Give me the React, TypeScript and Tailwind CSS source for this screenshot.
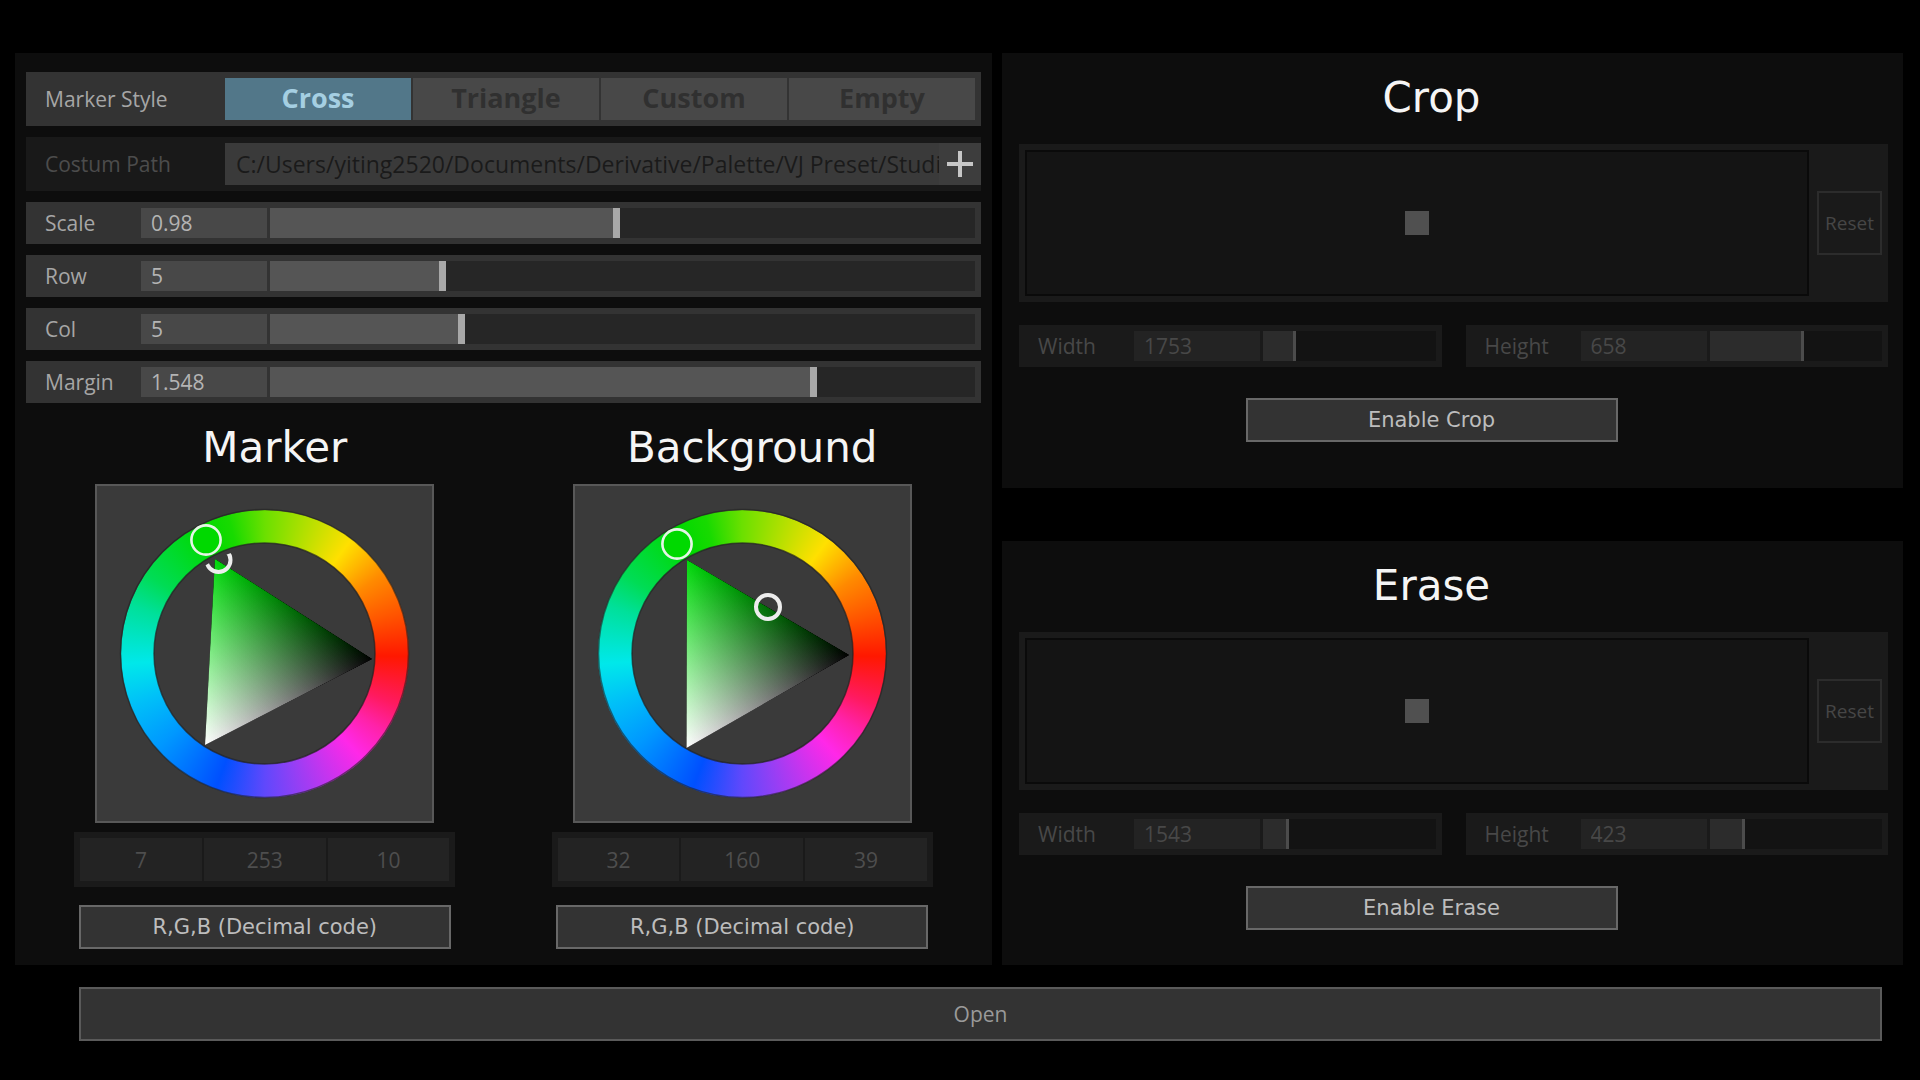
import { useId, useState } from "react";

const BUTTON =
  "h-11 w-[372px] max-w-full border-2 border-[#686868] bg-[#333333] font-['DejaVu_Sans',sans-serif] text-[21px] leading-7 text-[#bdbdbd]";
const TITLE =
  "font-['DejaVu_Sans',sans-serif] text-[42px] leading-[48px] text-[#f5f5f5]";

type SliderProps = {
  label: string;
  value: string;
  percent: number;
  disabled?: boolean;
};

function SliderRow({ label, value, percent, disabled = false }: SliderProps) {
  const id = useId();
  const [position, setPosition] = useState(percent);
  const [text, setText] = useState(value);
  const fill = disabled ? "#2c2c2c" : "#555555";
  const track = disabled ? "#131313" : "#262626";

  return (
    <div
      className={
        "flex h-[42px] w-full min-w-0 items-center pr-1.5 " +
        (disabled ? "bg-[#1a1a1a] text-[#484848]" : "bg-[#333333] text-[#a6a6a6]")
      }
    >
      <label htmlFor={id} className="w-[115px] shrink-0 pl-[19px]">
        {label}
      </label>
      <input
        id={id}
        type="text"
        value={text}
        disabled={disabled}
        onChange={(e) => setText(e.target.value)}
        className={
          "mr-[3px] h-[30px] w-[126px] shrink-0 px-2.5 outline-none " +
          (disabled ? "bg-[#232323]" : "bg-[#484848] text-[#b4b4b4]")
        }
      />
      <input
        type="range"
        aria-label={label + " slider"}
        min={0}
        max={100}
        step="any"
        value={position}
        disabled={disabled}
        onChange={(e) => setPosition(Number(e.target.value))}
        style={{
          background: `linear-gradient(to right, ${fill} ${position}%, ${track} ${position}%)`,
        }}
        className={
          "h-[30px] min-w-0 flex-1 appearance-none outline-none [&::-webkit-slider-thumb]:h-[30px] [&::-webkit-slider-thumb]:appearance-none " +
          (disabled
            ? "[&::-webkit-slider-thumb]:w-[3px] [&::-webkit-slider-thumb]:bg-[#4c4c4c]"
            : "[&::-webkit-slider-thumb]:w-[7px] [&::-webkit-slider-thumb]:bg-[#a8a8a8]")
        }
      />
    </div>
  );
}

type Point = [number, number];

/* Foot of the perpendicular from p onto the line a-b. */
function foot(p: Point, a: Point, b: Point): Point {
  const dx = b[0] - a[0];
  const dy = b[1] - a[1];
  const t = ((p[0] - a[0]) * dx + (p[1] - a[1]) * dy) / (dx * dx + dy * dy);
  return [a[0] + t * dx, a[1] + t * dy];
}

type WheelProps = {
  hue: Point;
  white: Point;
  black: Point;
  ringHandle: Point;
  triangleHandle: Point;
};

function ColorWheel({ hue, white, black, ringHandle, triangleHandle }: WheelProps) {
  const id = useId();
  const points = [hue, white, black].map((p) => p.join(",")).join(" ");
  const hueEnd = foot(hue, white, black);
  const whiteEnd = foot(white, hue, black);

  return (
    <div className="grid aspect-square w-[339px] max-w-full place-items-center border-2 border-[#585858] bg-[#3a3a3a]">
      <div className="size-72 rounded-full [grid-area:1/1] bg-[conic-gradient(#6be000_0deg,#ffe000_37deg,#ff8a00_56deg,#ff5500_73deg,#ff1800_91deg,#ff1a60_111deg,#ff22a8_123deg,#ff28e8_137deg,#cc33ee_151deg,#9040f5_167deg,#6048fc_180deg,#0050ff_200deg,#0098ff_229deg,#00c0f8_249deg,#00e8ea_266deg,#00e09a_290deg,#00dc55_304deg,#00d900_333deg,#18da00_345deg,#6be000_360deg)]" />
      <svg viewBox="2 2 335 335" className="size-full [grid-area:1/1]" aria-hidden="true">
        <defs>
          <linearGradient
            id={id + "h"}
            gradientUnits="userSpaceOnUse"
            x1={hue[0]}
            y1={hue[1]}
            x2={hueEnd[0]}
            y2={hueEnd[1]}
          >
            <stop offset="0" stopColor="#00d80a" />
            <stop offset="1" stopColor="#000000" />
          </linearGradient>
          <linearGradient
            id={id + "w"}
            gradientUnits="userSpaceOnUse"
            x1={white[0]}
            y1={white[1]}
            x2={whiteEnd[0]}
            y2={whiteEnd[1]}
          >
            <stop offset="0" stopColor="#ffffff" />
            <stop offset="1" stopColor="#000000" />
          </linearGradient>
          <clipPath id={id + "c"}>
            <circle cx="169.5" cy="169.5" r="106" />
          </clipPath>
        </defs>
        <circle cx="169.5" cy="169.5" r="144" fill="none" stroke="#222222" strokeOpacity="0.6" strokeWidth="1.5" />
        <circle cx="169.5" cy="169.5" r="110.5" fill="#3a3a3a" stroke="#222222" strokeOpacity="0.7" strokeWidth="1.5" />
        <g className="isolate">
          <polygon points={points} fill={`url(#${id}h)`} />
          <polygon points={points} fill={`url(#${id}w)`} className="mix-blend-plus-lighter" />
        </g>
        <g clipPath={`url(#${id}c)`}>
          <circle cx={triangleHandle[0]} cy={triangleHandle[1]} r="12" fill="none" stroke="#ededed" strokeWidth="4" />
        </g>
        <circle cx={ringHandle[0]} cy={ringHandle[1]} r="14.6" fill="#00d900" stroke="#e6f5e6" strokeWidth="2.6" />
      </svg>
    </div>
  );
}

type PickerProps = { title: string; rgb: [string, string, string]; wheel: WheelProps };

function ColorPicker({ title, rgb, wheel }: PickerProps) {
  const channels = ["Red", "Green", "Blue"];
  return (
    <section className="flex min-w-0 flex-1 flex-col items-center">
      <h2 className={TITLE + " mb-3 pl-5"}>{title}</h2>
      <ColorWheel {...wheel} />
      <div className="mt-[9px] flex h-[55px] w-[381px] max-w-full gap-0.5 bg-[#1a1a1a] p-1.5">
        {rgb.map((value, i) => (
          <input
            key={channels[i]}
            type="text"
            aria-label={title + " " + channels[i]}
            defaultValue={value}
            disabled
            className="min-w-0 flex-1 bg-[#232323] text-center text-[#4e4e4e]"
          />
        ))}
      </div>
      <button type="button" className={BUTTON + " mt-[18px]"}>
        R,G,B (Decimal code)
      </button>
    </section>
  );
}

type RegionProps = {
  title: string;
  width: SliderProps;
  height: SliderProps;
  className: string;
};

function RegionPanel({ title, width, height, className }: RegionProps) {
  return (
    <section className={"flex flex-col bg-[#0d0d0d] pt-[21px] pr-[15px] pl-[17px] " + className}>
      <h2 className={TITLE + " pr-11 text-center"}>{title}</h2>
      <div className="mt-[22px] flex h-[158px] items-center gap-2 bg-[#1a1a1a] p-1.5">
        <div className="flex h-full min-w-0 flex-1 items-center justify-center border-2 border-[#0a0a0a] bg-[#141414]">
          <button type="button" disabled aria-label={title + " position"} className="size-6 bg-[#505050]" />
        </div>
        <button
          type="button"
          disabled
          className="h-16 w-[65px] border-2 border-[#2c2c2c] text-[19px] leading-6 text-[#464646]"
        >
          Reset
        </button>
      </div>
      <div className="mt-[23px] flex gap-6">
        <SliderRow {...width} disabled />
        <SliderRow {...height} disabled />
      </div>
      <div className="mt-[31px] flex justify-center pr-11">
        <button type="button" className={BUTTON}>
          Enable {title}
        </button>
      </div>
    </section>
  );
}

export default function App() {
  const styles = ["Cross", "Triangle", "Custom", "Empty"];
  const [active, setActive] = useState("Cross");

  return (
    <main className="min-h-screen bg-black pt-[53px] pr-[17px] pb-9 pl-[15px] font-['Open_Sans',sans-serif] text-[21px] leading-7">
      <div className="grid grid-cols-[977fr_901fr] gap-2.5">
        <div className="min-w-0 bg-[#0d0d0d] px-[11px] pt-[19px] pb-4">
          <div className="flex flex-col gap-[11px]">
            <div className="flex h-[54px] items-center bg-[#333333] pr-1.5">
              <span id="marker-style" className="w-[199px] shrink-0 pl-[19px] text-[#a6a6a6]">
                Marker Style
              </span>
              <div role="group" aria-labelledby="marker-style" className="flex min-w-0 flex-1 gap-0.5">
                {styles.map((name) => (
                  <button
                    key={name}
                    type="button"
                    aria-pressed={active === name}
                    onClick={() => setActive(name)}
                    className={
                      "h-[42px] min-w-0 flex-1 pb-0.5 text-[27px] leading-9 font-bold " +
                      (active === name ? "bg-[#527789] text-[#a5cfe2]" : "bg-[#484848] text-[#303030]")
                    }
                  >
                    {name}
                  </button>
                ))}
              </div>
            </div>

            <div className="flex h-[54px] items-center bg-[#191919]">
              <label htmlFor="custom-path" className="w-[199px] shrink-0 pl-[19px] text-[#4c4c4c]">
                Costum Path
              </label>
              <input
                id="custom-path"
                type="text"
                disabled
                defaultValue="C:/Users/yiting2520/Documents/Derivative/Palette/VJ Preset/Studio"
                className="h-[42px] min-w-0 flex-1 bg-[#3a3a3a] pl-[11px] text-[23px] text-[#1a1a1a]"
              />
              <button
                type="button"
                aria-label="Browse"
                className="flex h-[42px] w-[42px] shrink-0 items-center justify-center bg-[#3d3d3d]"
              >
                <svg viewBox="0 0 28 28" className="size-7" stroke="#c6c6c6" strokeWidth="4" aria-hidden="true">
                  <path d="M14 1v26M1 14h26" />
                </svg>
              </button>
            </div>

            <SliderRow label="Scale" value="0.98" percent={49.2} />
            <SliderRow label="Row" value="5" percent={24.2} />
            <SliderRow label="Col" value="5" percent={26.9} />
            <SliderRow label="Margin" value="1.548" percent={77.4} />
          </div>

          <div className="mt-[21px] flex">
            <ColorPicker
              title="Marker"
              rgb={["7", "253", "10"]}
              wheel={{
                hue: [120, 75],
                white: [110, 261],
                black: [277, 175],
                ringHandle: [111, 56],
                triangleHandle: [123.5, 76],
              }}
            />
            <ColorPicker
              title="Background"
              rgb={["32", "160", "39"]}
              wheel={{
                hue: [114, 76],
                white: [113.5, 264],
                black: [276, 171],
                ringHandle: [104, 60],
                triangleHandle: [195, 123],
              }}
            />
          </div>
        </div>

        <div className="flex min-w-0 flex-col gap-[53px]">
          <RegionPanel
            title="Crop"
            width={{ label: "Width", value: "1753", percent: 17.6 }}
            height={{ label: "Height", value: "658", percent: 54.2 }}
            className="pb-[46px]"
          />
          <RegionPanel
            title="Erase"
            width={{ label: "Width", value: "1543", percent: 13.6 }}
            height={{ label: "Height", value: "423", percent: 19.4 }}
            className="flex-1"
          />
        </div>
      </div>

      <div className="mt-[22px] pr-[21px] pl-16">
        <button
          type="button"
          className="h-[54px] w-full border-2 border-[#5a5a5a] bg-[#333333] text-[#9a9a9a]"
        >
          Open
        </button>
      </div>
    </main>
  );
}
